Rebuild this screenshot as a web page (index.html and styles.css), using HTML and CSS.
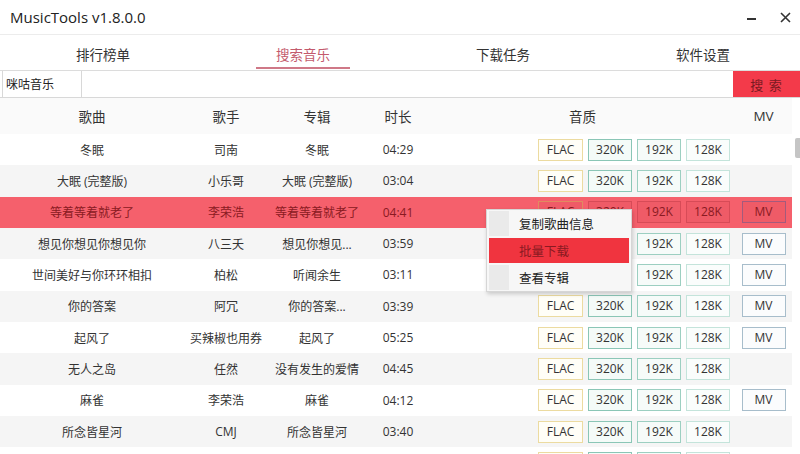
FILE: index.html
```html
<!DOCTYPE html>
<html lang="zh-CN">
<head>
<meta charset="utf-8">
<title>MusicTools</title>
<link rel="stylesheet" href="styles.css">
</head>
<body>
<div class="app">
  <div class="titlebar">
    <div class="title">MusicTools v1.8.0.0</div>
    <div class="winbtns">
      <span class="minbtn"></span>
      <svg class="closebtn" width="11" height="11" viewBox="0 0 11 11"><path d="M1 1L10 10M10 1L1 10" stroke="#333" stroke-width="1.6"/></svg>
    </div>
  </div>
  <div class="tabs">
    <div class="tab">排行榜单</div>
    <div class="tab active">搜索音乐</div>
    <div class="tab">下载任务</div>
    <div class="tab">软件设置</div>
  </div>
  <div class="searchrow">
    <div class="source">咪咕音乐</div>
    <div class="input"></div>
    <div class="searchbtn">搜 索</div>
  </div>
  <div class="body">
    <div class="table">
      <div class="row head">
        <div class="c song">歌曲</div>
        <div class="c singer">歌手</div>
        <div class="c album">专辑</div>
        <div class="c dur">时长</div>
        <div class="c qual qh">音质</div>
        <div class="c mv">MV</div>
      </div>
      <div class="row">
        <div class="c song">冬眠</div><div class="c singer">司南</div><div class="c album">冬眠</div><div class="c dur">04:29</div>
        <div class="c qual"><span class="b flac">FLAC</span><span class="b k320">320K</span><span class="b k192">192K</span><span class="b k128">128K</span></div>
        <div class="c mv"></div>
      </div>
      <div class="row alt">
        <div class="c song">大眠 (完整版)</div><div class="c singer">小乐哥</div><div class="c album">大眠 (完整版)</div><div class="c dur">03:04</div>
        <div class="c qual"><span class="b flac">FLAC</span><span class="b k320">320K</span><span class="b k192">192K</span><span class="b k128">128K</span></div>
        <div class="c mv"></div>
      </div>
      <div class="row sel">
        <div class="c song">等着等着就老了</div><div class="c singer">李荣浩</div><div class="c album">等着等着就老了</div><div class="c dur">04:41</div>
        <div class="c qual"><span class="b flac">FLAC</span><span class="b k320">320K</span><span class="b k192">192K</span><span class="b k128">128K</span></div>
        <div class="c mv"><span class="b bmv">MV</span></div>
      </div>
      <div class="row alt">
        <div class="c song">想见你想见你想见你</div><div class="c singer">八三夭</div><div class="c album">想见你想见...</div><div class="c dur">03:59</div>
        <div class="c qual"><span class="b flac">FLAC</span><span class="b k320">320K</span><span class="b k192">192K</span><span class="b k128">128K</span></div>
        <div class="c mv"><span class="b bmv">MV</span></div>
      </div>
      <div class="row">
        <div class="c song">世间美好与你环环相扣</div><div class="c singer">柏松</div><div class="c album">听闻余生</div><div class="c dur">03:11</div>
        <div class="c qual"><span class="b flac">FLAC</span><span class="b k320">320K</span><span class="b k192">192K</span><span class="b k128">128K</span></div>
        <div class="c mv"><span class="b bmv">MV</span></div>
      </div>
      <div class="row alt">
        <div class="c song">你的答案</div><div class="c singer">阿冗</div><div class="c album">你的答案...</div><div class="c dur">03:39</div>
        <div class="c qual"><span class="b flac">FLAC</span><span class="b k320">320K</span><span class="b k192">192K</span><span class="b k128">128K</span></div>
        <div class="c mv"><span class="b bmv">MV</span></div>
      </div>
      <div class="row">
        <div class="c song">起风了</div><div class="c singer">买辣椒也用券</div><div class="c album">起风了</div><div class="c dur">05:25</div>
        <div class="c qual"><span class="b flac">FLAC</span><span class="b k320">320K</span><span class="b k192">192K</span><span class="b k128">128K</span></div>
        <div class="c mv"><span class="b bmv">MV</span></div>
      </div>
      <div class="row alt">
        <div class="c song">无人之岛</div><div class="c singer">任然</div><div class="c album">没有发生的爱情</div><div class="c dur">04:45</div>
        <div class="c qual"><span class="b flac">FLAC</span><span class="b k320">320K</span><span class="b k192">192K</span><span class="b k128">128K</span></div>
        <div class="c mv"></div>
      </div>
      <div class="row">
        <div class="c song">麻雀</div><div class="c singer">李荣浩</div><div class="c album">麻雀</div><div class="c dur">04:12</div>
        <div class="c qual"><span class="b flac">FLAC</span><span class="b k320">320K</span><span class="b k192">192K</span><span class="b k128">128K</span></div>
        <div class="c mv"><span class="b bmv">MV</span></div>
      </div>
      <div class="row alt">
        <div class="c song">所念皆星河</div><div class="c singer">CMJ</div><div class="c album">所念皆星河</div><div class="c dur">03:40</div>
        <div class="c qual"><span class="b flac">FLAC</span><span class="b k320">320K</span><span class="b k192">192K</span><span class="b k128">128K</span></div>
        <div class="c mv"></div>
      </div>
      <div class="row">
        <div class="c song"></div><div class="c singer"></div><div class="c album"></div><div class="c dur"></div>
        <div class="c qual"><span class="b flac"></span><span class="b k320"></span><span class="b k192"></span><span class="b k128"></span></div>
        <div class="c mv"></div>
      </div>
    </div>
    <div class="scrolltrack"><div class="thumb"></div></div>
    <div class="menu">
      <div class="mi">复制歌曲信息</div>
      <div class="mi hot">批量下载</div>
      <div class="mi">查看专辑</div>
    </div>
  </div>
</div>
</body>
</html>
```

FILE: styles.css
```css
html, body {
  margin: 0;
  padding: 0;
  background: #ffffff;
}
body {
  width: 800px;
  height: 454px;
  overflow: hidden;
  font-family: "Open Sans", "Noto Sans CJK SC", sans-serif;
  color: #333;
}
.app {
  display: flex;
  flex-direction: column;
  width: 800px;
  height: 454px;
}
.titlebar {
  height: 35px;
  display: flex;
  align-items: center;
  justify-content: space-between;
  border-bottom: 1px solid #ececec;
  box-sizing: border-box;
}
.title {
  padding-left: 10px;
  font-size: 15px;
  color: #222;
  padding-bottom: 1px;
}
.winbtns {
  display: flex;
  align-items: center;
  gap: 24px;
  padding-right: 9px;
}
.minbtn {
  width: 9px;
  height: 2px;
  background: #333;
  margin-top: 3px;
}
.closebtn {
  display: block;
}
.tabs {
  height: 36px;
  display: grid;
  grid-template-columns: repeat(4, 200px);
  border-bottom: 1px solid #dcdcdc;
  box-sizing: border-box;
}
.tab {
  display: flex;
  align-items: center;
  justify-content: center;
  font-size: 13.5px;
  color: #333;
  position: relative;
  padding-top: 2px;
  padding-left: 6px;
}
.tab.active {
  color: #c35a6c;
}
.tab.active::after {
  content: "";
  position: absolute;
  left: 56px;
  right: 50px;
  bottom: 1px;
  height: 2px;
  background: #cf7887;
}
.searchrow {
  height: 27px;
  display: flex;
  border-bottom: 1px solid #d8d8d8;
  box-sizing: border-box;
}
.source {
  width: 80px;
  margin-left: 2px;
  border-left: 1px solid #d8d8d8;
  border-right: 1px solid #d8d8d8;
  box-sizing: border-box;
  font-size: 12px;
  display: flex;
  align-items: center;
  padding-left: 3px;
  color: #222;
}
.input {
  flex: 1;
}
.searchbtn {
  width: 67px;
  background: #f33a4a;
  color: #7a1a22;
  font-size: 13px;
  display: flex;
  align-items: center;
  justify-content: center;
  letter-spacing: 1px;
}
.body {
  flex: 1;
  display: flex;
  position: relative;
  overflow: hidden;
}
.table {
  width: 792px;
  display: flex;
  flex-direction: column;
}
.row {
  display: grid;
  grid-template-columns: 184px 84px 98px 64px 305px 57px;
  height: 31.33px;
  flex: none;
  align-items: center;
  font-size: 12px;
  color: #333;
  background: #ffffff;
}
.row.alt {
  background: #f5f5f5;
}
.row.head {
  height: 36px;
  font-size: 13.5px;
  background: #fafafa;
  color: #333;
}
.c {
  text-align: center;
  white-space: nowrap;
}
.qual {
  display: flex;
  justify-content: flex-end;
  gap: 5px;
  padding-right: 5px;
}
.qh {
  justify-content: center;
  padding-right: 0;
}
.mv {
  display: flex;
  justify-content: center;
}
.b {
  display: inline-block;
  width: 44px;
  height: 22px;
  line-height: 20px;
  box-sizing: border-box;
  border: 1px solid #9fd3c5;
  text-align: center;
  font-size: 12px;
  color: #333;
  background: #f8fcfb;
}
.b.flac {
  width: 45px;
  border-color: #ecdba0;
  background: #fffef7;
}
.b.k320 { border-color: #8ac6b6; background: #f4fbf8; }
.b.k192 { border-color: #9ccfc1; background: #f6fbf9; }
.b.k128 { border-color: #c4e4db; background: #fafdfc; }
.b.bmv { border-color: #a7bdcb; background: #fbfcfd; }
.row.sel {
  background: #f5606c;
  color: #8a1a22;
}
.row.sel .b {
  background: rgba(200, 60, 70, 0.12);
  color: #8a1a22;
  border-color: rgba(160, 40, 50, 0.3);
}
.row.sel .b.flac { border-color: #e08a60; }
.row.sel .b.bmv { border-color: #a45a7c; }
.scrolltrack {
  width: 8px;
  display: flex;
  justify-content: flex-end;
}
.thumb {
  width: 5px;
  height: 20px;
  margin-top: 40px;
  background: #c5c5c5;
  border-radius: 2px 0 0 2px;
}
.menu {
  position: absolute;
  left: 486px;
  top: 111px;
  width: 146px;
  box-sizing: border-box;
  padding: 1px 2px;
  background: #f7f7f7;
  border: 1px solid #d6d6d6;
  box-shadow: 1px 2px 4px rgba(0, 0, 0, 0.18);
  display: flex;
  flex-direction: column;
  gap: 2px;
}
.mi {
  height: 25px;
  display: flex;
  align-items: center;
  padding-left: 30px;
  font-size: 12.5px;
  color: #222;
  background: linear-gradient(to right, #eaeaea 0, #eaeaea 20px, #f7f7f7 20px);
}
.mi.hot {
  background: #f0343f;
  color: #8a1a22;
}
```
